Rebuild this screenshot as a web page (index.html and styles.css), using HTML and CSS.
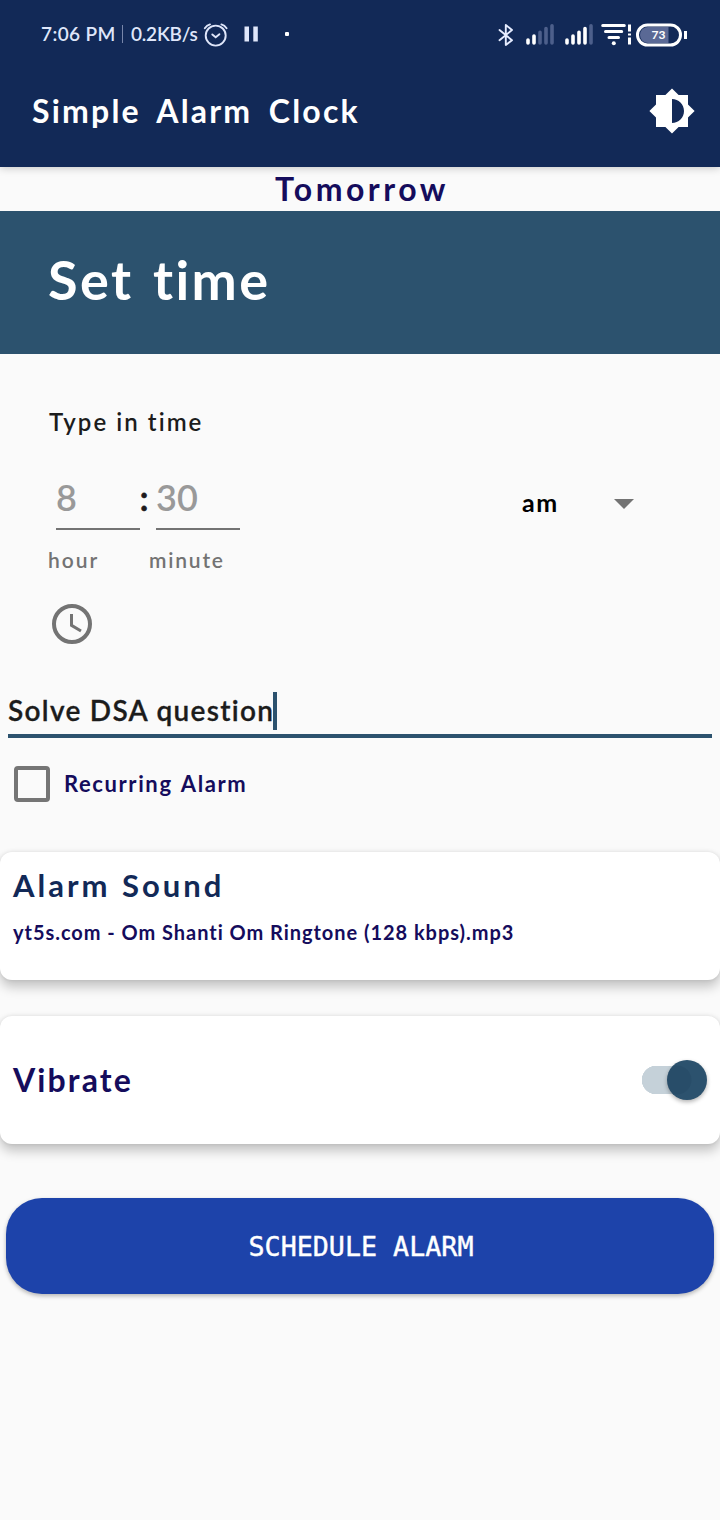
FILE: index.html
```html
<!DOCTYPE html>
<html lang="en">
<head>
<meta charset="utf-8">
<title>Simple Alarm Clock</title>
<link rel="stylesheet" href="styles.css">
</head>
<body>
<header class="header">
  <div class="status">
    <span class="status-time">7:06 PM</span>
    <span class="status-rule"></span>
    <span class="status-speed">0.2KB/s</span>
    <svg class="status-left" width="100" height="30" viewBox="200 20 100 30" fill="none" stroke="#dfe6fa" stroke-width="1.9" stroke-linecap="round">
      <circle cx="215.7" cy="35.6" r="10"/><path d="M204.8 28.2Q206.8 25.4 210 24.4M221.4 24.4Q224.6 25.4 226.6 28.2M212.3 34.4L215.7 37.2L219.4 34.2"/>
      <path d="M244.5 26.5h4.5v15h-4.5zM253.3 26.5h4.5v15h-4.5z" fill="#dfe6fa" stroke="none"/>
      <rect x="285" y="32" width="4" height="4" rx="1" fill="#fff" stroke="none"/>
    </svg>
    <span class="status-right">
      <svg width="200" height="30" viewBox="494 20 200 30" fill="none">
        <path d="M499.5 30L512 40.2L505.8 45V25L512 30L499.5 40.2" stroke="#e6ecff" stroke-width="1.9" stroke-linecap="round" stroke-linejoin="round"/>
        <g stroke="#fff" stroke-width="3.6" stroke-linecap="round">
          <path d="M528 40V43M534 36V43M567 40V43M573 36V43M579 32.3V43M585 28.5V43"/>
          <path d="M540 32.3V43M546 28.5V43M552 25.8V43M591 25.8V43" stroke="#4d5f8b"/>
        </g>
        <g stroke="#fff" stroke-width="3" stroke-linecap="round"><path d="M602.7 25.5H624.3M605.5 31.5H621.7M609 37.5H618.5"/></g>
        <circle cx="613.8" cy="43.2" r="2" fill="#fff"/>
        <path d="M629.5 24.5V31.5M629.5 33.5V35.5M629.5 37.5V44.5" stroke="#fff" stroke-width="3"/>
        <path d="M648 27H668.5V43H648A8 8 0 0 1 648 27Z" fill="#5a6995"/>
        <rect x="637.5" y="25" width="43" height="20" rx="10" stroke="#fff" stroke-width="3"/>
        <path d="M685.5 31V39" stroke="#fff" stroke-width="3"/>
        <text class="battery-level" x="658.5" y="39.3" text-anchor="middle">73</text>
      </svg>
    </span>
  </div>
  <div class="appbar">
    <h1 class="app-title">Simple Alarm Clock</h1>
    <svg width="48" height="48" viewBox="0 0 24 24" fill="#fff"><path d="M20 15.31L23.31 12 20 8.69V4h-4.69L12 .69 8.69 4H4v4.69L.69 12 4 15.31V20h4.69L12 23.31 15.31 20H20v-4.69zM12 18V6c3.31 0 6 2.69 6 6s-2.69 6-6 6z"/></svg>
  </div>
</header>
<main>
  <div class="day"><span>Tomorrow</span></div>
  <h2 class="banner">Set time</h2>
  <section class="picker">
    <div class="picker-title">Type in time</div>
    <div class="time-row">
      <div class="field">8</div>
      <div class="colon">:</div>
      <div class="field">30</div>
      <div class="period"><span>am</span><svg width="20" height="11" viewBox="0 0 20 11"><path d="M0 0H20L10 10Z" fill="#737373"/></svg></div>
    </div>
    <div class="labels"><span class="label-hour">hour</span><span class="label-minute">minute</span></div>
    <svg class="clock" width="48" height="48" viewBox="0 0 48 48" fill="none" stroke="#737373"><circle cx="24" cy="24" r="18" stroke-width="4"/><path d="M23.5 14V25.3L33 31" stroke-width="3"/></svg>
  </section>
  <div class="note"><span class="note-text">Solve DSA question</span><span class="caret"></span></div>
  <label class="recurring"><span class="box"></span><span class="recurring-text">Recurring Alarm</span></label>
  <section class="card sound">
    <div class="sound-title">Alarm Sound</div>
    <div class="sound-file">yt5s.com - Om Shanti Om Ringtone (128 kbps).mp3</div>
  </section>
  <section class="card vibrate">
    <span class="vibrate-text">Vibrate</span>
    <span class="switch"><span class="thumb"></span></span>
  </section>
  <button class="schedule">SCHEDULE ALARM</button>
</main>
</body>
</html>
```
FILE: styles.css
```css
* { box-sizing: border-box; }
body { margin: 0; width: 720px; height: 1520px; overflow: hidden; background: #fafafa; font-family: Lato, "Open Sans", sans-serif; font-weight: 600; color: #1c1c1c; white-space: nowrap; }
h1, h2 { margin: 0; font-weight: 700; }
svg { display: block; flex: none; }
.header { position: relative; height: 167px; background: #122957; box-shadow: 0 1px 8px rgba(0,0,0,.22); color: #fff; }
.status { display: flex; height: 68px; padding: 0 26px 0 41px; align-items: center; font-size: 19px; color: #dfe6fa; }
.status-time { width: 81px; padding-bottom: 2px; letter-spacing: .4px; }
.status-rule { width: 1px; height: 18px; background: #7886aa; margin-right: 8px; }
.status-speed { width: 69px; padding-bottom: 2px; letter-spacing: -.2px; }
.status-left, .status-right { margin-top: 2px; }
.status-right { margin-left: auto; }
.battery-level { font: 700 12px Lato, sans-serif; fill: #fff; }
.appbar { display: flex; height: 86px; padding: 0 24px 0 32px; align-items: center; justify-content: space-between; }
.app-title { font-size: 32px; line-height: 40px; padding-bottom: 1px; letter-spacing: 2.2px; word-spacing: 6.5px; }
.day { height: 44px; padding-left: 4px; line-height: 43px; text-align: center; font-size: 32px; font-weight: 700; letter-spacing: 3.5px; color: #150c5c; }
.banner { height: 143px; padding-left: 48px; line-height: 137px; font-size: 54px; letter-spacing: 2.4px; word-spacing: 4px; background: #2c526e; color: #fff; }
.picker { padding: 47px 48px 0; }
.picker-title { padding-left: 1px; font-size: 24px; line-height: 42px; letter-spacing: 2.05px; }
.time-row { display: flex; margin: 23px 0 0 8px; line-height: 62px; font-size: 36px; }
.field { width: 84px; height: 64px; border-bottom: 2px solid #737373; color: #999; }
.colon { width: 16px; padding-right: 8px; display: flex; justify-content: center; -webkit-text-stroke: .6px; }
.period { display: flex; width: 112px; margin-left: 282px; height: 72px; justify-content: space-between; align-items: center; font-size: 25px; color: #000; font-weight: 700; letter-spacing: 1.6px; }
.period svg { margin-top: 5px; }
.labels { display: flex; margin-top: 2px; line-height: 40px; font-size: 21px; color: #737373; }
.label-hour { width: 101px; letter-spacing: 2px; }
.label-minute { letter-spacing: 1.8px; }
.clock { margin-top: 20px; }
.note { display: flex; height: 54px; margin: 36px 8px 0; border-bottom: 4px solid #2c526e; line-height: 52px; font-size: 28px; -webkit-text-stroke: .3px; }
.note-text { width: 265px; letter-spacing: 1.3px; }
.caret { width: 4px; height: 38px; margin-top: 8px; background: #2c526e; }
.recurring { display: flex; margin: 28px 14px 0; height: 36px; font-size: 22px; font-weight: 700; line-height: 35px; color: #150c5c; }
.box { width: 36px; height: 36px; margin-right: 14px; border: 4px solid #757575; border-radius: 4px; }
.recurring-text { letter-spacing: 1.6px; word-spacing: 2px; }
.card { height: 128px; border-radius: 12px; background: #fff; box-shadow: 0 7px 12px rgba(0,0,0,.22), 0 0 4px rgba(0,0,0,.1); }
.sound { margin-top: 50px; padding: 10px 13px; font-weight: 700; }
.sound-title { line-height: 46px; font-size: 31px; letter-spacing: 3px; word-spacing: 1px; color: #122957; }
.sound-file { line-height: 49px; font-size: 20px; letter-spacing: .96px; color: #150c5c; }
.vibrate { display: flex; margin-top: 36px; padding: 0 13px; align-items: center; justify-content: space-between; color: #150c5c; font-size: 32px; font-weight: 700; }
.vibrate-text { padding-bottom: 1px; letter-spacing: 2.1px; }
.switch { display: flex; width: 65px; height: 40px; justify-content: flex-end; background: radial-gradient(circle at 14px 20px, #c5d1d9 14px, transparent 14.5px), linear-gradient(#c5d1d9, #c5d1d9) 14px 6px / 30px 28px no-repeat; }
.thumb { width: 40px; height: 40px; border-radius: 50%; background: radial-gradient(circle at 10px 20px, #284d69 14px, transparent 15px), #2c526e; box-shadow: 0 2px 4px rgba(0,0,0,.3); }
.schedule { display: block; width: 708px; height: 96px; margin: 54px 6px 0; padding: 0 0 0 2px; border: 0; border-radius: 36px; background: #1d43aa; color: #fff; font: 400 26.7px "DejaVu Sans Mono", monospace; box-shadow: 0 2px 4px rgba(0,0,0,.28); -webkit-text-stroke: .4px; }
```
